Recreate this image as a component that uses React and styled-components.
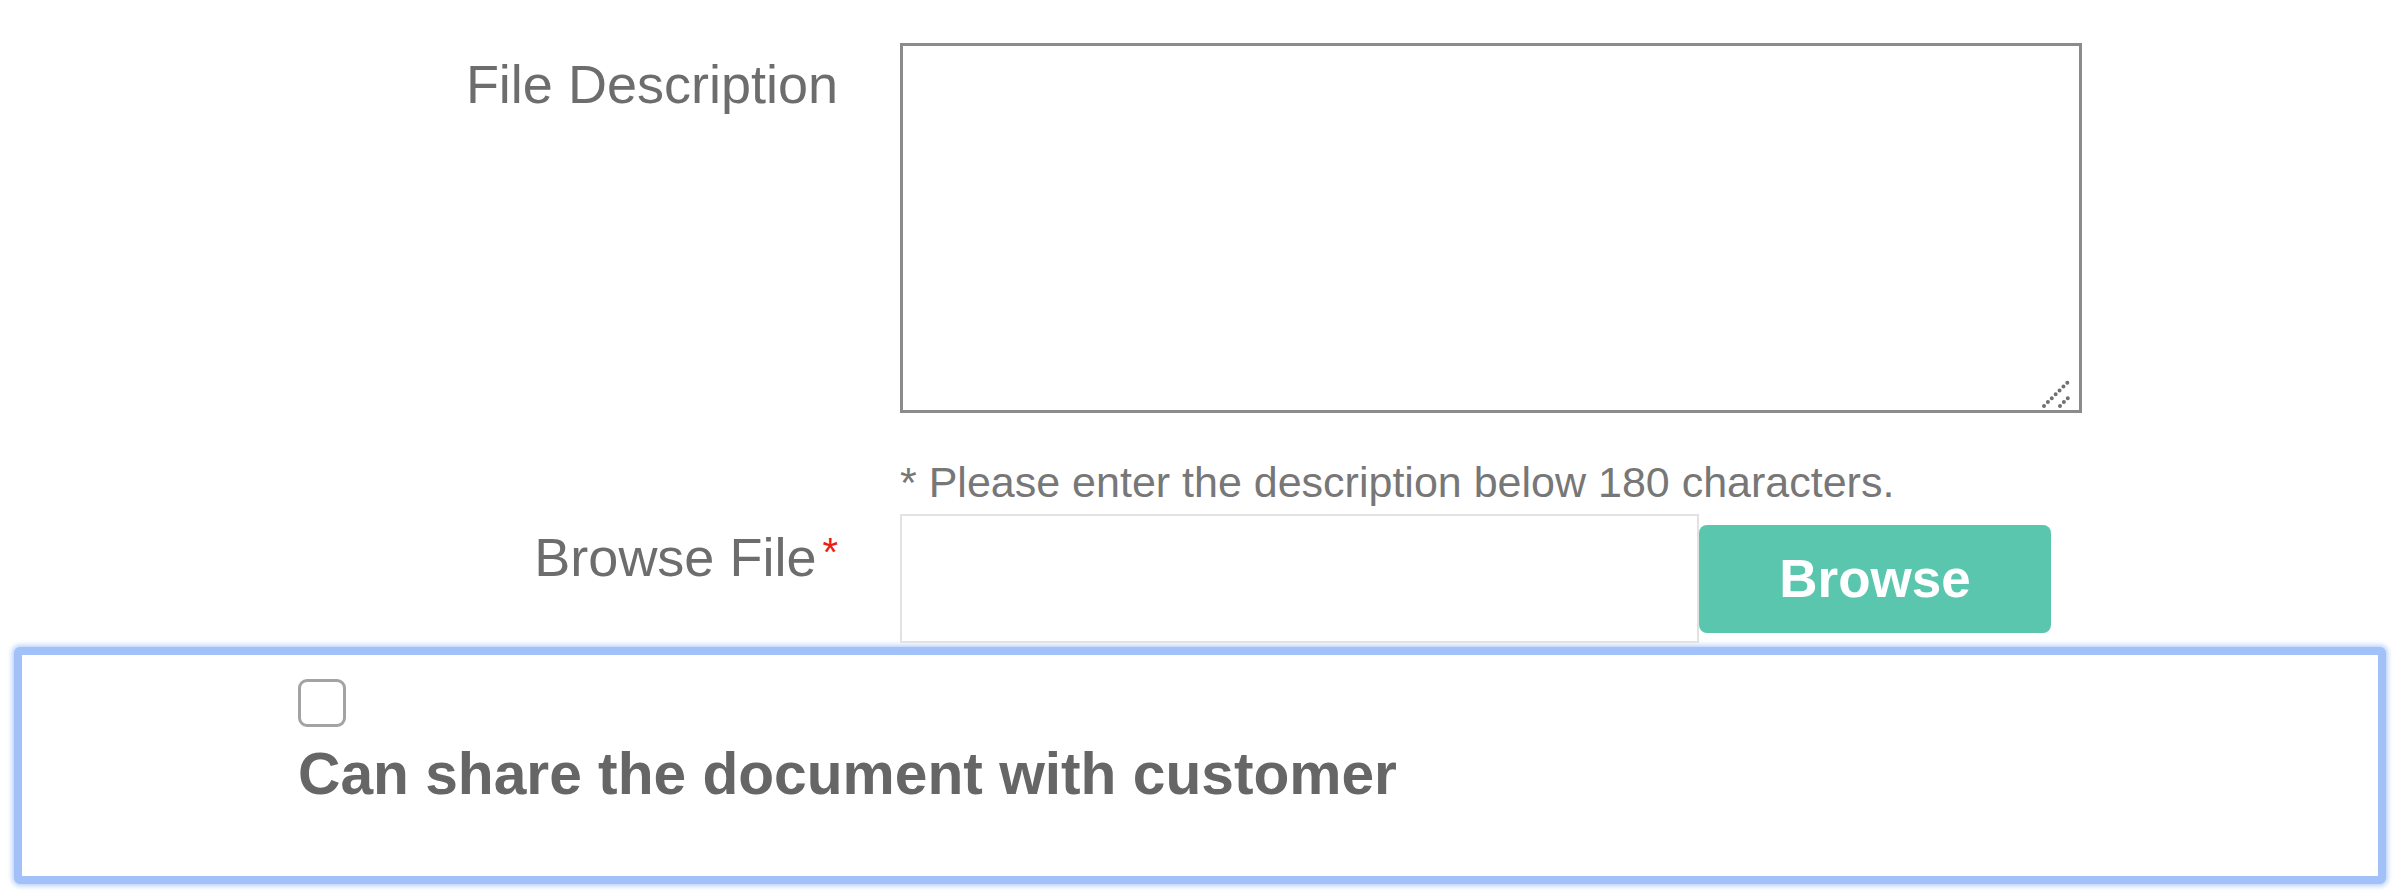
import React from "react";
import styled, { createGlobalStyle } from "styled-components";

const Global = createGlobalStyle`
  html, body { margin: 0; padding: 0; background: #fff; }
  body { font-family: "Liberation Sans", Arial, Helvetica, sans-serif; }
  * { box-sizing: border-box; }
`;

const Page = styled.div`
  width: 2400px;
  height: 894px;
  overflow: hidden;
  background: #fff;
  padding-top: 43px;
`;

const Form = styled.div`
  display: grid;
  grid-template-columns: 838px 1182px;
  column-gap: 62px;
  align-items: start;
`;

const Label = styled.label`
  display: block;
  text-align: right;
  font-size: 54px;
  line-height: 62px;
  color: #6d6d6d;
  padding-top: ${(p) => p.$top || 0}px;
  white-space: nowrap;
`;

const Req = styled.span`
  color: #f01a1a;
  font-size: 40px;
  line-height: 0;
  vertical-align: 10px;
  margin-left: 6px;
`;

const AreaWrap = styled.div`
  position: relative;
  width: 1182px;
  height: 370px;
`;

const TextArea = styled.textarea`
  display: block;
  width: 100%;
  height: 100%;
  border: 3px solid #8b8b8b;
  border-radius: 0;
  resize: none;
  outline: none;
  background: #fff;
  font: inherit;
  padding: 10px;
`;

const Grip = styled.svg`
  position: absolute;
  right: 3px;
  bottom: 3px;
  width: 40px;
  height: 36px;
  pointer-events: none;
`;

const Hint = styled.div`
  grid-column: 2;
  margin-top: 44px;
  font-size: 43px;
  line-height: 50px;
  color: #777;
  white-space: nowrap;
`;

const Spacer = styled.div``;

const FileGroup = styled.div`
  display: flex;
  align-items: center;
  margin-top: 7px;
`;

const FileInput = styled.div`
  width: 799px;
  height: 129px;
  border: 2px solid #e2e2e2;
  background: #fff;
`;

const BrowseButton = styled.button`
  width: 352px;
  height: 108px;
  border: none;
  border-radius: 8px;
  background: #5ac6ae;
  color: #fff;
  font-family: "Liberation Sans", Arial, sans-serif;
  font-weight: 700;
  font-size: 53px;
  padding: 0;
  cursor: pointer;
`;

const FocusBox = styled.div`
  margin: 4px 14px 0 14px;
  width: 2372px;
  border: 8px solid #a2c1f9;
  border-radius: 6px;
  box-shadow: 0 0 5px 2px rgba(160, 192, 250, 0.75);
  background: #fff;
  padding: 24px 0 69px 276px;
`;

const Check = styled.input`
  appearance: none;
  -webkit-appearance: none;
  display: block;
  margin: 0;
  width: 48px;
  height: 48px;
  border: 3px solid #a3a3a3;
  border-radius: 9px;
  background: #fff;
`;

const CheckLabel = styled.div`
  margin-top: 14px;
  font-size: 58.7px;
  line-height: 66px;
  font-weight: 700;
  color: #666;
  white-space: nowrap;
`;

export default function App() {
  return (
    <Page>
      <Global />
      <Form>
        <Label $top={10}>File Description</Label>
        <AreaWrap>
          <TextArea />
          <Grip viewBox="0 0 40 36">
            <line x1="5" y1="32" x2="31" y2="6" stroke="#707070" strokeWidth="4" strokeDasharray="0 5.5" strokeLinecap="round" />
            <line x1="21" y1="32" x2="31" y2="22" stroke="#707070" strokeWidth="4" strokeDasharray="0 5.5" strokeLinecap="round" />
          </Grip>
        </AreaWrap>
        <Spacer />
        <Hint>* Please enter the description below 180 characters.</Hint>
        <Label $top={19}>
          Browse File<Req>*</Req>
        </Label>
        <FileGroup>
          <FileInput />
          <BrowseButton>Browse</BrowseButton>
        </FileGroup>
      </Form>
      <FocusBox>
        <Check type="checkbox" />
        <CheckLabel>Can share the document with customer</CheckLabel>
      </FocusBox>
    </Page>
  );
}
